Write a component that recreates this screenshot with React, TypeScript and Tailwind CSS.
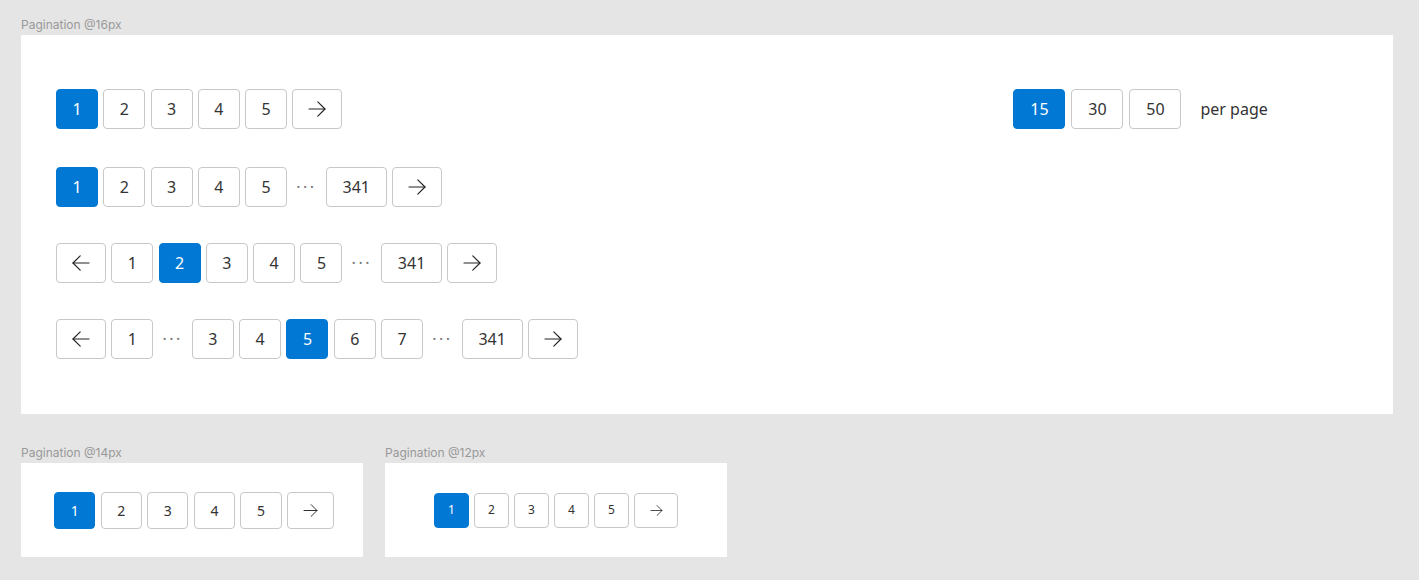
import React from 'react'

type Size = 'lg' | 'md' | 'sm'

const sizes = {
  lg: { h: 'h-10', num: 'w-[42px]', arrow: 'w-[50px]', wide: 'w-[61px]', text: 'text-[16px]', gap: 'gap-[5.3px]', icon: 18 },
  md: { h: 'h-[37px]', num: 'w-[41.3px]', arrow: 'w-[47px]', wide: 'w-[56px]', text: 'text-[14px]', gap: 'gap-[5.3px]', icon: 15 },
  sm: { h: 'h-[35px]', num: 'w-[35px]', arrow: 'w-[44px]', wide: 'w-[50px]', text: 'text-[12px]', gap: 'gap-[5px]', icon: 13 },
}

function Arrow({ dir, w }: { dir: 'left' | 'right'; w: number }) {
  const h = Math.round(w * 0.88)
  return (
    <svg
      width={w}
      height={h}
      viewBox="0 0 18 16"
      fill="none"
      stroke="#222"
      strokeWidth={1.15}
      strokeLinecap="round"
      strokeLinejoin="round"
      style={{ transform: dir === 'left' ? 'scaleX(-1)' : undefined }}
    >
      <path d="M1 8H17" />
      <path d="M9.8 0.8L17 8L9.8 15.2" />
    </svg>
  )
}

type Item = number | 'prev' | 'next' | 'dots'

function Pager({ items, active, size = 'lg' }: { items: Item[]; active: number; size?: Size }) {
  const s = sizes[size]
  return (
    <div className={`flex items-center ${s.gap}`}>
      {items.map((it, i) => {
        if (it === 'dots') {
          return (
            <span key={i} className={`w-[28px] text-center text-[#777] tracking-[2.5px] ${s.text}`}>
              ···
            </span>
          )
        }
        if (it === 'prev' || it === 'next') {
          return (
            <button
              key={i}
              className={`${s.h} ${s.arrow} flex items-center justify-center rounded-[4px] border border-[#c8c8c8] bg-white`}
            >
              <Arrow dir={it === 'prev' ? 'left' : 'right'} w={s.icon} />
            </button>
          )
        }
        const isActive = it === active
        const wide = it > 99
        return (
          <button
            key={i}
            className={`${s.h} ${wide ? s.wide : s.num} ${s.text} flex items-center justify-center rounded-[4px] ${
              isActive ? 'bg-[#0078d4] text-white border border-[#0078d4]' : 'bg-white text-[#333] border border-[#c8c8c8]'
            }`}
          >
            {it}
          </button>
        )
      })}
    </div>
  )
}

function Label({ children }: { children: React.ReactNode }) {
  return (
    <div className="text-[12px] leading-[15px] text-[#999] mb-[3px]" style={{ fontFamily: 'Inter, sans-serif' }}>
      {children}
    </div>
  )
}

export default function App() {
  return (
    <div
      className="w-[1419px] h-[580px] bg-[#e5e5e5] pl-[21px] pt-[17px] overflow-hidden"
      style={{ fontFamily: '"Noto Sans", "Open Sans", sans-serif' }}
    >
      <Label>Pagination @16px</Label>
      <div className="w-[1372px] h-[379px] bg-white pl-[35px] pt-[54px] flex flex-col gap-9">
        <div className="flex items-center mb-[2px]">
          <Pager items={[1, 2, 3, 4, 5, 'next']} active={1} />
          <div className="ml-[671px] flex items-center gap-[6px]">
            {[15, 30, 50].map((n) => (
              <button
                key={n}
                className={`h-10 w-[52px] text-[16px] flex items-center justify-center rounded-[4px] border ${
                  n === 15 ? 'bg-[#0078d4] border-[#0078d4] text-white' : 'bg-white border-[#c8c8c8] text-[#333]'
                }`}
              >
                {n}
              </button>
            ))}
            <span className="ml-[13px] text-[16px] text-[#333]">per page</span>
          </div>
        </div>
        <Pager items={[1, 2, 3, 4, 5, 'dots', 341, 'next']} active={1} />
        <Pager items={['prev', 1, 2, 3, 4, 5, 'dots', 341, 'next']} active={2} />
        <Pager items={['prev', 1, 'dots', 3, 4, 5, 6, 7, 'dots', 341, 'next']} active={5} />
      </div>

      <div className="flex gap-[22px] mt-[31px]">
        <div>
          <Label>Pagination @14px</Label>
          <div className="w-[342px] h-[94px] bg-white flex items-center pl-[33px]">
            <Pager items={[1, 2, 3, 4, 5, 'next']} active={1} size="md" />
          </div>
        </div>
        <div>
          <Label>Pagination @12px</Label>
          <div className="w-[342px] h-[94px] bg-white flex items-center justify-center">
            <Pager items={[1, 2, 3, 4, 5, 'next']} active={1} size="sm" />
          </div>
        </div>
      </div>
    </div>
  )
}
